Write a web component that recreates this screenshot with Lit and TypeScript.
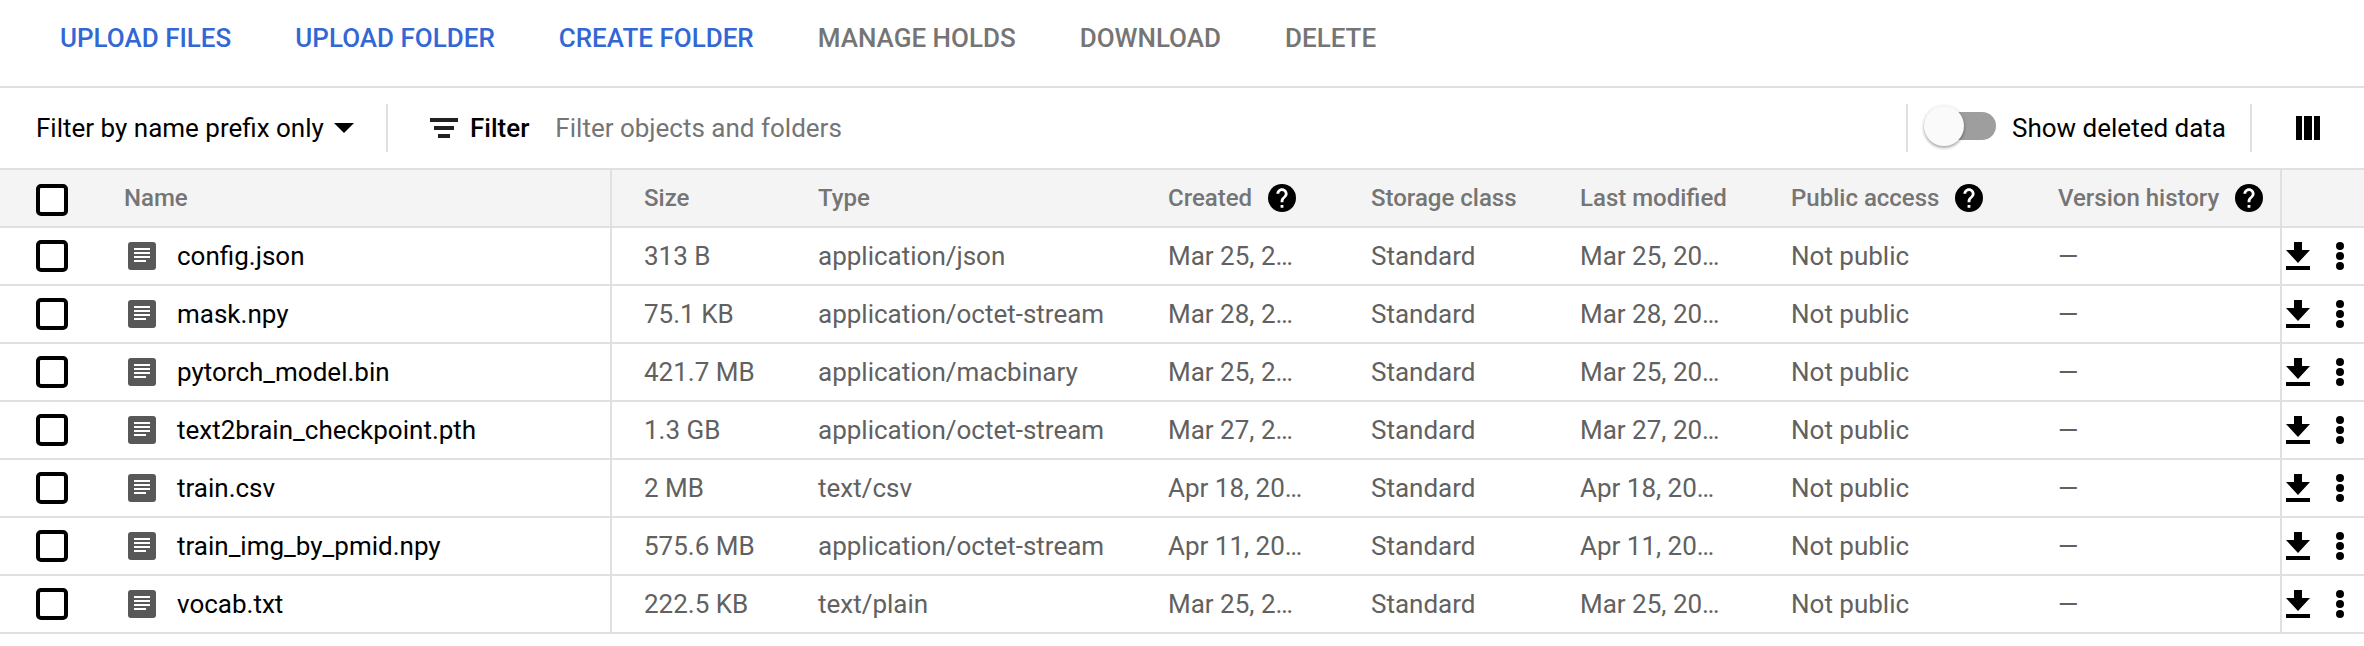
import { LitElement, html, css, svg } from "lit";
import { customElement, property } from "lit/decorators.js";

interface StorageObject {
  name: string;
  size: string;
  type: string;
  created: string;
  storageClass: string;
  modified: string;
}

const OBJECTS: StorageObject[] = [
  { name: "config.json", size: "313 B", type: "application/json", created: "Mar 25, 2…", storageClass: "Standard", modified: "Mar 25, 20…" },
  { name: "mask.npy", size: "75.1 KB", type: "application/octet-stream", created: "Mar 28, 2…", storageClass: "Standard", modified: "Mar 28, 20…" },
  { name: "pytorch_model.bin", size: "421.7 MB", type: "application/macbinary", created: "Mar 25, 2…", storageClass: "Standard", modified: "Mar 25, 20…" },
  { name: "text2brain_checkpoint.pth", size: "1.3 GB", type: "application/octet-stream", created: "Mar 27, 2…", storageClass: "Standard", modified: "Mar 27, 20…" },
  { name: "train.csv", size: "2 MB", type: "text/csv", created: "Apr 18, 20…", storageClass: "Standard", modified: "Apr 18, 20…" },
  { name: "train_img_by_pmid.npy", size: "575.6 MB", type: "application/octet-stream", created: "Apr 11, 20…", storageClass: "Standard", modified: "Apr 11, 20…" },
  { name: "vocab.txt", size: "222.5 KB", type: "text/plain", created: "Mar 25, 2…", storageClass: "Standard", modified: "Mar 25, 20…" },
];

const shared = css`
  :host {
    display: block;
    font-family: Roboto, "Liberation Sans", sans-serif;
    font-size: 26px;
    line-height: 32px;
    color: #000;
  }
  * {
    box-sizing: border-box;
  }
  button,
  select,
  input {
    margin: 0;
    padding: 0;
    border: 0;
    background: none;
    font: inherit;
    color: inherit;
    cursor: pointer;
  }
  svg {
    display: block;
    flex: none;
  }
`;

@customElement("action-bar")
export class ActionBar extends LitElement {
  static styles = [
    shared,
    css`
      .bar {
        display: flex;
        gap: 64px;
        height: 88px;
        padding: 22px 60px 0;
        border-bottom: 2px solid #e0e0e0;
      }
      .action {
        height: 32px;
        font-weight: 500;
        color: #3367d6;
        white-space: nowrap;
      }
      .action:disabled {
        color: #757575;
        cursor: default;
      }
    `,
  ];

  render() {
    return html`
      <div class="bar" role="toolbar" aria-label="Object actions">
        <button class="action">UPLOAD FILES</button>
        <button class="action">UPLOAD FOLDER</button>
        <button class="action">CREATE FOLDER</button>
        <button class="action" disabled>MANAGE HOLDS</button>
        <button class="action" disabled>DOWNLOAD</button>
        <button class="action" disabled>DELETE</button>
      </div>
    `;
  }
}

@customElement("filter-bar")
export class FilterBar extends LitElement {
  static styles = [
    shared,
    css`
      .bar {
        display: flex;
        align-items: center;
        height: 82px;
        padding: 0 44px 0 36px;
        border-bottom: 2px solid #e0e0e0;
      }
      .mode {
        display: grid;
        align-items: center;
      }
      .mode > * {
        grid-area: 1 / 1;
      }
      .mode select {
        appearance: none;
        padding-right: 30px;
      }
      .mode svg {
        justify-self: end;
        pointer-events: none;
      }
      .divider {
        flex: none;
        width: 2px;
        height: 48px;
        background: #e0e0e0;
      }
      .after-mode {
        margin: 0 42px 0 32px;
      }
      .label {
        display: flex;
        align-items: center;
        gap: 12px;
        font-weight: 500;
      }
      .query {
        flex: 1;
        min-width: 0;
        height: 32px;
        margin: 0 26px;
        cursor: text;
        outline: none;
      }
      .query::placeholder {
        color: #757575;
        opacity: 1;
      }
      .toggle {
        display: flex;
        align-items: center;
        gap: 16px;
        margin: 0 24px 0 16px;
        white-space: nowrap;
        cursor: pointer;
      }
      .switch {
        appearance: none;
        display: flex;
        align-items: center;
        width: 72px;
        height: 44px;
        padding-bottom: 4px;
      }
      .switch::before {
        content: "";
        width: 40px;
        height: 40px;
        border-radius: 50%;
        background: #fafafa;
        box-shadow: 0 2px 3px rgba(0, 0, 0, 0.3), 0 0 4px rgba(0, 0, 0, 0.1);
        z-index: 1;
      }
      .switch::after {
        content: "";
        flex: 1;
        height: 28px;
        margin-left: -36px;
        border-radius: 14px;
        background: #9e9e9e;
      }
      .columns {
        margin-left: 44px;
      }
    `,
  ];

  render() {
    return html`
      <div class="bar">
        <div class="mode">
          <select aria-label="Filter mode">
            <option>Filter by name prefix only</option>
          </select>
          <svg width="20" height="10" viewBox="0 0 20 10"><path d="M0 0h20L10 10z" /></svg>
        </div>
        <div class="divider after-mode"></div>
        <label class="label" for="query">
          <svg width="28" height="20" viewBox="0 0 28 20">
            <path d="M0 0h28v4H0zM4 8h20v4H4zM8 16h12v4H8z" fill="#212121" />
          </svg>
          Filter
        </label>
        <input id="query" class="query" type="text" placeholder="Filter objects and folders" />
        <div class="divider"></div>
        <label class="toggle">
          <input class="switch" type="checkbox" role="switch" />
          Show deleted data
        </label>
        <div class="divider"></div>
        <button class="columns" aria-label="Column display options">
          <svg width="24" height="24" viewBox="0 0 24 24">
            <path d="M0 0h6v24H0zM8 0h8v24H8zM18 0h6v24h-6z" />
          </svg>
        </button>
      </div>
    `;
  }
}

const helpIcon = html`<svg width="28" height="28" viewBox="2 2 20 20">
  ${svg`<circle cx="12" cy="12" r="10" /><path fill="#fff" d="M13 19h-2v-2h2v2zM15.07 11.25l-.9.92C13.45 12.9 13 13.5 13 15h-2v-.5c0-1.1.45-2.1 1.17-2.83l1.24-1.26c.37-.36.59-.86.59-1.41 0-1.1-.9-2-2-2s-2 .9-2 2H8c0-2.21 1.79-4 4-4s4 1.79 4 4c0 .88-.36 1.68-.93 2.25z" />`}
</svg>`;

@customElement("object-table")
export class ObjectTable extends LitElement {
  @property({ attribute: false }) objects: StorageObject[] = [];

  static styles = [
    shared,
    css`
      .table {
        width: 100%;
        table-layout: fixed;
        border-collapse: separate;
        border-spacing: 0;
      }
      .c-check { width: 124px; }
      .c-size { width: 174px; }
      .c-type { width: 350px; }
      .c-created { width: 203px; }
      .c-class { width: 209px; }
      .c-modified { width: 211px; }
      .c-access { width: 267px; }
      .c-history { width: 256px; }
      .c-actions { width: 82px; }
      th,
      td {
        height: 58px;
        padding: 0 0 0 32px;
        border-bottom: 2px solid #e0e0e0;
        text-align: left;
        vertical-align: middle;
        white-space: nowrap;
        color: #616161;
      }
      th {
        background: #f4f4f4;
        font-size: 24px;
        font-weight: 500;
        color: #757575;
      }
      .check {
        padding-left: 36px;
      }
      th.check {
        padding-top: 4px;
      }
      .name {
        padding-left: 0;
        border-right: 2px solid #e0e0e0;
        color: #000;
      }
      th.name {
        color: #757575;
      }
      .history {
        border-right: 2px solid #e0e0e0;
      }
      .box {
        appearance: none;
        display: block;
        width: 32px;
        height: 32px;
        border: 4px solid #000;
        border-radius: 5px;
        background: #fff;
      }
      .head {
        display: flex;
        align-items: center;
        gap: 16px;
      }
      .file {
        display: flex;
        align-items: center;
        gap: 21px;
        padding-left: 4px;
      }
      .file a {
        color: inherit;
        text-decoration: none;
      }
      .actions {
        padding-left: 4px;
      }
      .tools {
        display: flex;
        align-items: center;
        gap: 26px;
      }
    `,
  ];

  private renderRow(o: StorageObject) {
    return html`
      <tr>
        <td class="check"><input class="box" type="checkbox" aria-label=${`Select ${o.name}`} /></td>
        <td class="name">
          <div class="file">
            <svg width="28" height="28" viewBox="0 0 28 28">
              <rect width="28" height="28" rx="3" fill="#585858" />
              <path d="M6 6h16v2H6zM6 10h16v2H6zM6 14h16v2H6zM6 18h12v2H6z" fill="#fff" />
            </svg>
            <a href="#">${o.name}</a>
          </div>
        </td>
        <td>${o.size}</td>
        <td>${o.type}</td>
        <td>${o.created}</td>
        <td>${o.storageClass}</td>
        <td>${o.modified}</td>
        <td>Not public</td>
        <td class="history">—</td>
        <td class="actions">
          <div class="tools">
            <button aria-label=${`Download ${o.name}`}>
              <svg width="24" height="28" viewBox="0 0 24 28">
                <path d="M8 0h8v8h8L12 21 0 8h8zM0 24h24v4H0z" />
              </svg>
            </button>
            <button aria-label=${`More actions for ${o.name}`}>
              <svg width="8" height="28" viewBox="0 0 8 28">
                <circle cx="4" cy="4" r="4" /><circle cx="4" cy="14" r="4" /><circle cx="4" cy="24" r="4" />
              </svg>
            </button>
          </div>
        </td>
      </tr>
    `;
  }

  render() {
    return html`
      <table class="table">
        <colgroup>
          <col class="c-check" /><col /><col class="c-size" /><col class="c-type" /><col class="c-created" />
          <col class="c-class" /><col class="c-modified" /><col class="c-access" /><col class="c-history" />
          <col class="c-actions" />
        </colgroup>
        <thead>
          <tr>
            <th class="check"><input class="box" type="checkbox" aria-label="Select all" /></th>
            <th class="name">Name</th>
            <th>Size</th>
            <th>Type</th>
            <th><div class="head">Created ${helpIcon}</div></th>
            <th>Storage class</th>
            <th>Last modified</th>
            <th><div class="head">Public access ${helpIcon}</div></th>
            <th class="history"><div class="head">Version history ${helpIcon}</div></th>
            <th class="actions"></th>
          </tr>
        </thead>
        <tbody>
          ${this.objects.map((o) => this.renderRow(o))}
        </tbody>
      </table>
    `;
  }
}

@customElement("app-root")
export class AppRoot extends LitElement {
  static styles = css`
    :host {
      display: block;
      background: #fff;
    }
  `;

  render() {
    return html`
      <action-bar></action-bar>
      <filter-bar></filter-bar>
      <object-table .objects=${OBJECTS}></object-table>
    `;
  }
}
